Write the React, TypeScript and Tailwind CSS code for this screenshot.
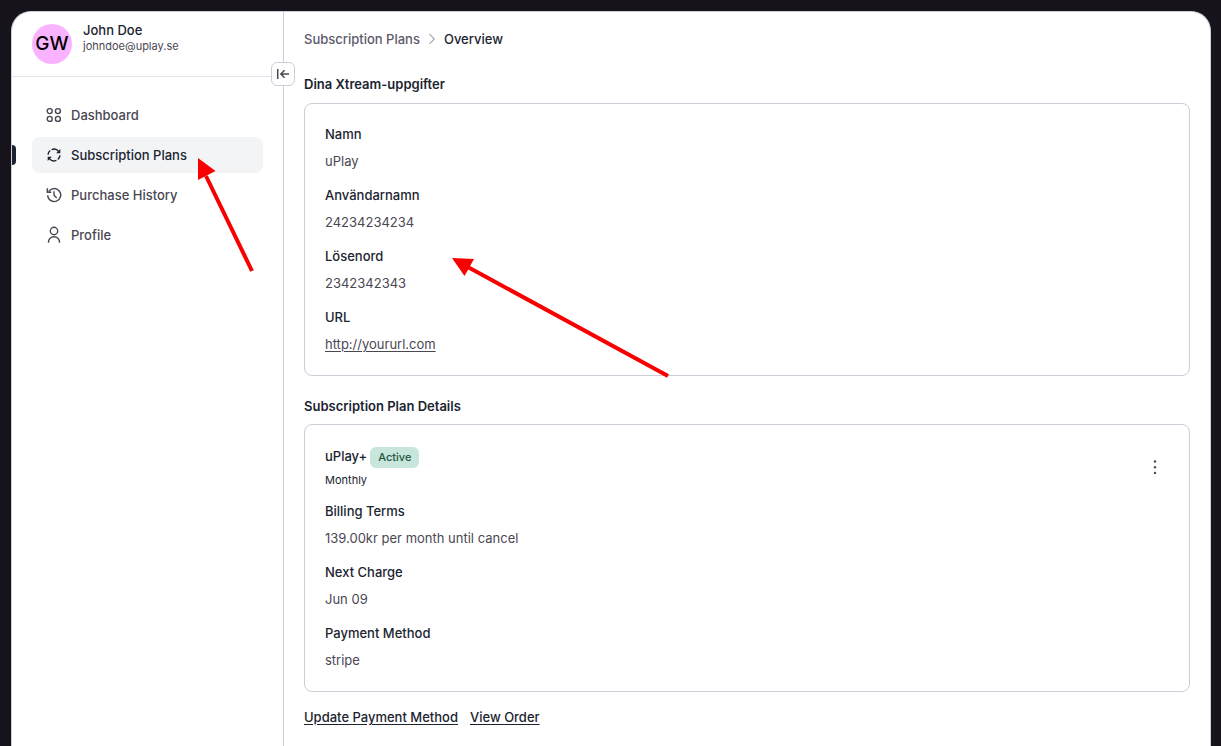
import React from "react";

type Field = { label: string; value: string; href?: string };

const account: Field[] = [
  { label: "Namn", value: "uPlay" },
  { label: "Användarnamn", value: "24234234234" },
  { label: "Lösenord", value: "2342342343" },
  { label: "URL", value: "http://yoururl.com", href: "#url" },
];

const plan: Field[] = [
  { label: "Billing Terms", value: "139.00kr per month until cancel" },
  { label: "Next Charge", value: "Jun 09" },
  { label: "Payment Method", value: "stripe" },
];

function Icon({ children }: { children: React.ReactNode }) {
  return (
    <svg
      viewBox="0 0 16 18"
      className="h-[18px] w-4 shrink-0"
      fill="none"
      stroke="currentColor"
      strokeWidth="1.4"
      aria-hidden="true"
    >
      {children}
    </svg>
  );
}

function GridIcon() {
  return (
    <Icon>
      <circle cx="3.7" cy="5.1" r="2.5" />
      <circle cx="11.900" cy="5.1" r="2.5" />
      <circle cx="3.7" cy="12.900" r="2.5" />
      <circle cx="11.900" cy="12.900" r="2.5" />
    </Icon>
  );
}

function RefreshIcon() {
  return (
    <Icon>
      <path d="M2 8.600A6 6 0 0 1 4.200 4.500M5.600 3.700A6 6 0 0 1 12.800 5.600" />
      <path d="M14 9.400A6 6 0 0 1 11.800 13.500M10.400 14.300A6 6 0 0 1 3.200 12.400" />
      <path d="M14.300 3v4.200h-4.200zM1.700 15v-4.200h4.200z" fill="currentColor" stroke="none" />
    </Icon>
  );
}

function HistoryIcon() {
  return (
    <Icon>
      <path d="M2.700 5.600A6.500 6.500 0 1 1 1.700 9.200" />
      <path d="M1.300 2.300v4h4" />
      <path d="M8 5.300v4l2.700 2.700" />
    </Icon>
  );
}

function ProfileIcon() {
  return (
    <Icon>
      <circle cx="8" cy="5" r="3.700" />
      <path d="M2.500 16.800v-.6a5.500 5.500 0 0 1 11 0v.6" />
    </Icon>
  );
}

function CollapseIcon() {
  return (
    <svg viewBox="0 0 14 14" className="size-3.5" fill="none" stroke="currentColor" strokeWidth="1.5" aria-hidden="true">
      <path d="M1.700 2v10M13 7H4.800M8.600 3.200 4.800 7l3.800 3.800" />
    </svg>
  );
}

const navItems = [
  { label: "Dashboard", icon: <GridIcon />, active: false },
  { label: "Subscription Plans", icon: <RefreshIcon />, active: true },
  { label: "Purchase History", icon: <HistoryIcon />, active: false },
  { label: "Profile", icon: <ProfileIcon />, active: false },
];

function Fields({ items }: { items: Field[] }) {
  return (
    <dl className="flex flex-col gap-3">
      {items.map((item) => (
        <div key={item.label} className="flex flex-col gap-[5px]">
          <dt className="text-[13px] leading-[22px] font-medium text-[#1b2430]">{item.label}</dt>
          <dd className="text-[13px] leading-[22px] text-[#4a4753]">
            {item.href ? (
              <a href={item.href} className="underline underline-offset-2">{item.value}</a>
            ) : (
              item.value
            )}
          </dd>
        </div>
      ))}
    </dl>
  );
}

function Sidebar() {
  return (
    <aside className="relative w-[272px] shrink-0 border-r border-[#cbced8]">
      <div className="flex h-[65px] items-start gap-[11px] border-b border-[#e1e3ea] px-5 pt-3">
        <div className="flex size-10 items-center justify-center rounded-full bg-[#fab4ff] text-[19px] font-medium text-black">
          GW
        </div>
        <div className="-mt-px flex flex-col">
          <span className="text-[13px] leading-[14px] font-medium text-[#1b2430]">John Doe</span>
          <span className="text-[11px] leading-[18px] text-[#4a4753]">johndoe@uplay.se</span>
        </div>
      </div>
      <button
        type="button"
        aria-label="Collapse sidebar"
        className="absolute top-[50px] -right-3 flex size-6 items-center justify-center rounded-md border border-[#cbced8] bg-white text-[#4a4753]"
      >
        <CollapseIcon />
      </button>
      <nav className="p-5">
        <ul className="flex flex-col gap-1">
          {navItems.map((item) => (
            <li key={item.label} className="relative">
              {item.active && <span className="absolute top-2 -left-5 h-5 w-1 rounded-r bg-[#1b2430]" />}
              <a
                href="#nav"
                className={
                  item.active
                    ? "flex h-9 items-center gap-[9px] rounded-lg bg-[#f2f4f6] px-3.5 text-[13px] leading-[22px] font-medium text-[#1b2430]"
                    : "flex h-9 items-center gap-[9px] rounded-lg px-3.5 text-[13px] leading-[22px] font-medium text-[#4a4753]"
                }
              >
                {item.icon}
                {item.label}
              </a>
            </li>
          ))}
        </ul>
      </nav>
    </aside>
  );
}

export default function App() {
  return (
    <div className="relative flex min-h-screen bg-[#16141a] pt-[11px] pr-[10px] pl-[11px] font-['Inter',sans-serif]">
      <div className="flex min-w-0 flex-1 rounded-t-[20px] border border-b-0 border-[#cbced8] bg-white">
        <Sidebar />
        <main className="min-w-0 flex-1 px-5 pt-[17px]">
          <nav aria-label="Breadcrumb" className="mb-[25px] flex items-center gap-2 text-[13px] leading-5 font-medium">
            <a href="#plans" className="text-[#5d596b]">Subscription Plans</a>
            <svg viewBox="0 0 8 12" className="h-3 w-2" fill="none" stroke="#aaa9b3" strokeWidth="1.2" aria-hidden="true">
              <path d="m1.500 1.200 4.800 4.800-4.800 4.800" />
            </svg>
            <span className="text-[#1b2430]">Overview</span>
          </nav>
          <section className="mb-5">
            <h2 className="mb-[9px] text-[13px] leading-5 font-semibold text-[#1b2430]">Dina Xtream-uppgifter</h2>
            <div className="rounded-lg border border-[#cbced8] px-5 pt-[19px] pb-5">
              <Fields items={account} />
            </div>
          </section>
          <section className="mb-[15px]">
            <h2 className="mb-2 text-[13px] leading-5 font-semibold text-[#1b2430]">Subscription Plan Details</h2>
            <div className="rounded-lg border border-[#cbced8] p-5">
              <div className="mb-3 flex items-center justify-between">
                <div className="flex flex-col gap-[3px]">
                  <div className="flex h-6 items-center gap-[3px]">
                    <span className="text-[13px] font-medium text-[#1b2430]">uPlay+</span>
                    <span className="rounded-md bg-[#c8e6db] px-2 text-[11px] leading-[21px] font-medium text-[#1d5540]">Active</span>
                  </div>
                  <span className="text-[11px] leading-4 text-[#1b2430]">Monthly</span>
                </div>
                <button type="button" aria-label="Plan options" className="mr-1 text-[#4a4753]">
                  <svg viewBox="0 0 20 20" className="size-5" fill="currentColor" aria-hidden="true">
                    <circle cx="10" cy="4.500" r="1.200" />
                    <circle cx="10" cy="10.200" r="1.200" />
                    <circle cx="10" cy="15.900" r="1.200" />
                  </svg>
                </button>
              </div>
              <Fields items={plan} />
            </div>
          </section>
          <div className="flex gap-3 text-[13px] leading-5 font-medium text-[#1b2430]">
            <a href="#payment" className="underline underline-offset-2">Update Payment Method</a>
            <a href="#order" className="underline underline-offset-2">View Order</a>
          </div>
        </main>
      </div>
      <svg
        viewBox="0 0 480 230"
        className="pointer-events-none absolute top-[154px] left-[194px] h-[230px] w-[480px]"
        fill="#f90000"
        stroke="#f90000"
        strokeWidth="4"
        aria-hidden="true"
      >
        <path d="M58 117 12 22" />
        <path stroke="none" d="M4 4v22l17.500-9z" />
        <path d="M474 222 272 112" />
        <path stroke="none" d="m258 104 22 1-9.500 17z" />
      </svg>
    </div>
  );
}
